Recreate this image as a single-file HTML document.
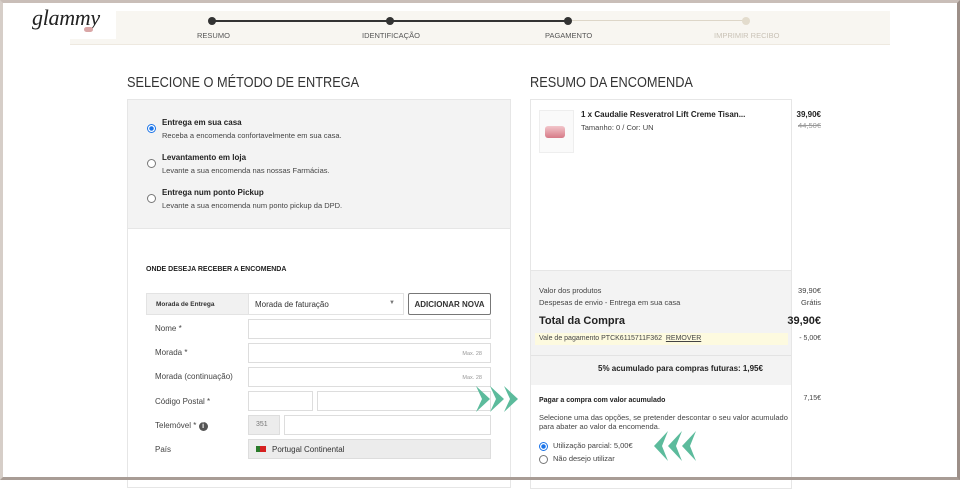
<!DOCTYPE html>
<html><head><meta charset="utf-8"><style>
*{margin:0;padding:0;box-sizing:border-box}
body{width:960px;height:480px;overflow:hidden;background:#fff;font-family:"Liberation Sans",sans-serif;color:#333;position:relative}
.frame{position:absolute;inset:0;border:3px solid #b3a7a0;border-left-color:#d6cec8;border-top-color:#c9beb8;border-right-color:#9c8f88;border-bottom-color:#a89c95;pointer-events:none;z-index:10}
.abs{position:absolute}
.hdr{left:70px;top:11px;width:820px;height:34px;background:#f8f6f1;border-bottom:1px solid #eee9e0}
.logo{left:28px;top:5px;font-family:"Liberation Serif",serif;font-style:italic;font-size:22px;color:#222;letter-spacing:-0.3px;background:#fff;width:88px;height:34px;padding-left:4px}
.dot{width:8px;height:8px;border-radius:50%;background:#333}
.lbl{font-size:7.5px;color:#555;top:31px}
h2{position:absolute;font-family:"Liberation Sans Narrow","Liberation Sans",sans-serif;font-weight:normal;font-size:15px;color:#333;transform:scaleX(.85);transform-origin:left}
.t{font-size:8px;color:#444}
.r{right:139px;text-align:right}
.b{font-weight:bold;color:#222}
.radio{width:9px;height:9px;border-radius:50%;border:1px solid #777;background:#fff}
.radio.on{border:1px solid #1a73e8;background:radial-gradient(#1a73e8 40%,#fff 50%)}
.inp{height:20px;border:1px solid #ddd;background:#fff}
.max{font-size:5.5px;color:#999;position:absolute;right:8px;top:7px}
</style></head><body>
<div class="frame"></div>
<div class="abs hdr"></div>
<div class="abs" style="left:212px;top:20px;width:356px;height:2px;background:#333"></div>
<div class="abs" style="left:568px;top:20px;width:178px;height:1px;background:#ddd6c8"></div>
<div class="abs dot" style="left:208px;top:17px"></div>
<div class="abs dot" style="left:386px;top:17px"></div>
<div class="abs dot" style="left:564px;top:17px"></div>
<div class="abs dot" style="left:742px;top:17px;background:#e3dccd"></div>
<div class="abs lbl" style="left:197px">RESUMO</div>
<div class="abs lbl" style="left:362px">IDENTIFICAÇÃO</div>
<div class="abs lbl" style="left:545px">PAGAMENTO</div>
<div class="abs lbl" style="left:714px;color:#c9c2b6">IMPRIMIR RECIBO</div>
<div class="abs logo">glammy</div>
<div class="abs" style="left:84px;top:27px;width:9px;height:5px;border-radius:3px;background:#d9a6a6"></div>

<h2 style="left:127px;top:74px">SELECIONE O MÉTODO DE ENTREGA</h2>
<h2 style="left:530px;top:74px">RESUMO DA ENCOMENDA</h2>

<div class="abs" style="left:127px;top:99px;width:384px;height:130px;background:#f3f3f3;border:1px solid #e6e6e6"></div>
<div class="abs" style="left:127px;top:228px;width:384px;height:260px;border:1px solid #e6e6e6;border-top:none"></div>
<div class="abs radio on" style="left:147px;top:124px"></div>
<div class="abs t b" style="left:162px;top:118px">Entrega em sua casa</div>
<div class="abs t" style="left:162px;top:131px;font-size:7.5px">Receba a encomenda confortavelmente em sua casa.</div>
<div class="abs radio" style="left:147px;top:159px"></div>
<div class="abs t b" style="left:162px;top:153px">Levantamento em loja</div>
<div class="abs t" style="left:162px;top:166px;font-size:7.5px">Levante a sua encomenda nas nossas Farmácias.</div>
<div class="abs radio" style="left:147px;top:194px"></div>
<div class="abs t b" style="left:162px;top:188px">Entrega num ponto Pickup</div>
<div class="abs t" style="left:162px;top:201px;font-size:7.5px">Levante a sua encomenda num ponto pickup da DPD.</div>

<div class="abs b" style="left:146px;top:266px;font-size:7px">ONDE DESEJA RECEBER A ENCOMENDA</div>
<div class="abs" style="left:146px;top:293px;width:103px;height:22px;background:#f1f1f1;border:1px solid #e3e3e3;font-size:6.5px;font-weight:bold;padding:7px 9px">Morada de Entrega</div>
<div class="abs" style="left:248px;top:293px;width:156px;height:22px;border:1px solid #e3e3e3;font-size:8px;padding:6px 6px">Morada de faturação<span style="position:absolute;right:8px;top:6px;font-size:6px;color:#777">▼</span></div>
<div class="abs" style="left:408px;top:293px;width:83px;height:22px;border:1px solid #777;border-radius:2px;font-size:8px;font-weight:bold;text-align:center;padding-top:6px;color:#333">ADICIONAR NOVA</div>
<div class="abs t" style="left:155px;top:324px">Nome *</div>
<div class="abs inp" style="left:248px;top:319px;width:243px"></div>
<div class="abs t" style="left:155px;top:348px">Morada *</div>
<div class="abs inp" style="left:248px;top:343px;width:243px"><span class="max">Max. 28</span></div>
<div class="abs t" style="left:155px;top:372px">Morada (continuação)</div>
<div class="abs inp" style="left:248px;top:367px;width:243px"><span class="max">Max. 28</span></div>
<div class="abs t" style="left:155px;top:397px">Código Postal *</div>
<div class="abs inp" style="left:248px;top:391px;width:65px"></div>
<div class="abs inp" style="left:317px;top:391px;width:174px"></div>
<div class="abs t" style="left:155px;top:421px">Telemóvel * <span style="display:inline-block;width:9px;height:9px;border-radius:50%;background:#555;color:#fff;font-size:7px;text-align:center;line-height:9px;font-weight:bold">i</span></div>
<div class="abs inp" style="left:248px;top:415px;width:32px;background:#ececec;font-size:7px;color:#777;padding:5px 7px">351</div>
<div class="abs inp" style="left:284px;top:415px;width:207px"></div>
<div class="abs t" style="left:155px;top:445px">País</div>
<div class="abs inp" style="left:248px;top:439px;width:243px;background:#ececec;font-size:8px;padding:5px 7px"><span style="display:inline-block;width:10px;height:6px;background:linear-gradient(90deg,#2a7a2a 40%,#d62020 40%);margin-right:6px;vertical-align:0"></span>Portugal Continental</div>

<div class="abs" style="left:530px;top:99px;width:262px;height:390px;border:1px solid #e6e6e6"></div>
<div class="abs" style="left:539px;top:110px;width:35px;height:43px;border:1px solid #eee;background:#fafafa"></div>
<div class="abs" style="left:545px;top:126px;width:20px;height:12px;border-radius:3px;background:linear-gradient(#f2c6cb,#d77a87)"></div>
<div class="abs t b" style="left:581px;top:110px">1 x Caudalie Resveratrol Lift Creme Tisan...</div>
<div class="abs t" style="left:581px;top:123px;font-size:7.5px">Tamanho: 0 / Cor: UN</div>
<div class="abs t b r" style="top:110px;font-size:8px">39,90€</div>
<div class="abs t r" style="top:121px;color:#999;text-decoration:line-through;font-size:7.5px">44,50€</div>
<div class="abs" style="left:531px;top:270px;width:260px;height:115px;background:#f3f3f3;border-top:1px solid #e6e6e6"></div>
<div class="abs t" style="left:539px;top:286px;font-size:7.5px">Valor dos produtos</div>
<div class="abs t r" style="top:286px;font-size:7.5px">39,90€</div>
<div class="abs t" style="left:539px;top:298px;font-size:7.5px">Despesas de envio - Entrega em sua casa</div>
<div class="abs t r" style="top:298px;font-size:7.5px">Grátis</div>
<div class="abs b" style="left:539px;top:315px;font-size:11px">Total da Compra</div>
<div class="abs b r" style="top:315px;font-size:11px">39,90€</div>
<div class="abs" style="left:535px;top:333px;width:253px;height:12px;background:#fdfadf"></div>
<div class="abs t" style="left:539px;top:335px;font-size:7px">Vale de pagamento PTCK6115711F362 &nbsp;<u>REMOVER</u></div>
<div class="abs t r" style="top:335px;font-size:7px">- 5,00€</div>
<div class="abs" style="left:531px;top:355px;width:260px;height:1px;background:#e3e3e3"></div>
<div class="abs t b" style="left:598px;top:364px;font-size:8px">5% acumulado para compras futuras: 1,95€</div>
<div class="abs t b" style="left:539px;top:397px;font-size:7px">Pagar a compra com valor acumulado</div>
<div class="abs t r" style="top:395px;font-size:7px">7,15€</div>
<div class="abs t" style="left:539px;top:413px;font-size:7.5px;line-height:9px;width:250px">Selecione uma das opções, se pretender descontar o seu valor acumulado para abater ao valor da encomenda.</div>
<div class="abs radio on" style="left:539px;top:442px"></div>
<div class="abs t" style="left:553px;top:441px;font-size:7.5px">Utilização parcial: 5,00€</div>
<div class="abs radio" style="left:539px;top:455px"></div>
<div class="abs t" style="left:553px;top:454px;font-size:7.5px">Não desejo utilizar</div>

<svg class="abs" style="left:474px;top:385px" width="48" height="28" viewBox="0 0 48 28"><g fill="#5cbb9c"><path d="M2 1 L16 14 L2 27 L8 14Z"/><path d="M16 1 L30 14 L16 27 L22 14Z"/><path d="M30 1 L44 14 L30 27 L36 14Z"/></g></svg>
<svg class="abs" style="left:650px;top:430px" width="48" height="32" viewBox="0 0 48 32"><g fill="#5cbb9c"><path d="M46 1 L32 16 L46 31 L40 16Z"/><path d="M32 1 L18 16 L32 31 L26 16Z"/><path d="M18 1 L4 16 L18 31 L12 16Z"/></g></svg>
</body></html>
